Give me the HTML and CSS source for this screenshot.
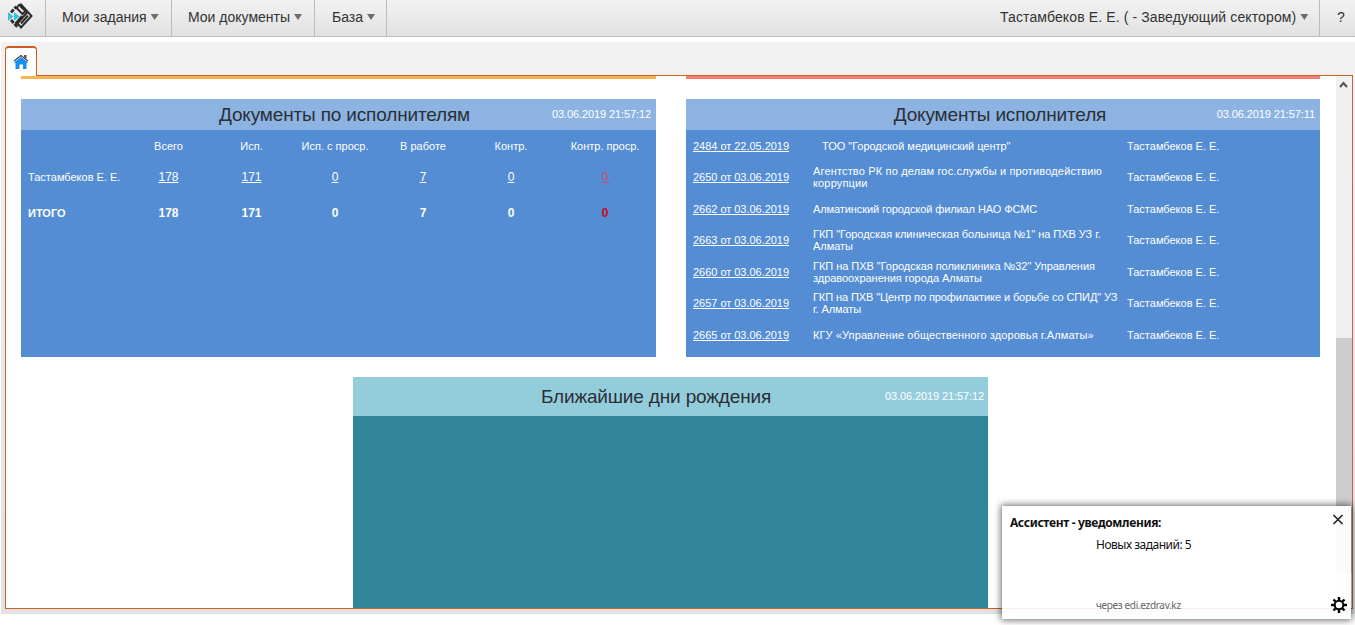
FILE: index.html
```html
<!DOCTYPE html>
<html lang="ru">
<head>
<meta charset="utf-8">
<title>Документооборот</title>
<link rel="stylesheet" href="styles.css">
</head>
<body>
<header class="topbar">
  <a class="logo"><svg width="26" height="26" viewBox="0 0 26 26" fill="none">
    <path d="M4 9.500 9.500 3.500M4 17l7 7.500" stroke="#2b2b2b" stroke-width="2.800" stroke-dasharray="4 1.200"/>
    <path d="M11 2.500 14 1.500l10.500 11.500L14 24.500l-3.500-4L20.500 9M11 2.500l-1 3 5.500 5.500 3-3-5.500-5M14 20.500l7-8M8.500 20.500 15 13" stroke="#2b2b2b" stroke-width="2"/>
    <path d="M1 9l5.500 4.500L1 18zM7 9l5.500 4.500L7 18z" fill="#35bfe3"/>
  </svg></a>
  <nav class="menu">
    <a class="item tasks"><span>Мои задания</span><i class="arrow"></i></a>
    <a class="item docs"><span>Мои документы</span><i class="arrow"></i></a>
    <a class="item base"><span>База</span><i class="arrow"></i></a>
  </nav>
  <a class="item user"><span>Тастамбеков Е. Е. ( - Заведующий сектором)</span><i class="arrow"></i></a>
  <a class="help">?</a>
</header>
<main class="shell">
  <div class="tabs"><div class="tab"><svg width="16" height="16" viewBox="0 0 16 16">
    <path d="M1.500 8 8 3l6.500 5v1H13.500v6H10v-4.500H6.500V15h-4V9h-1z" fill="#168ff0"/>
    <path d="M1 7l7-5.500L15 7" fill="none" stroke="#444" stroke-width="1.200"/><path d="M11 1h2.500v4L11 3z" fill="#555"/>
  </svg></div></div>
  <div class="content">
    <div class="board">
      <div class="strips"><div class="strip amber"></div><div class="strip coral"></div></div>
      <div class="pair">
        <section class="card blue">
          <div class="head"><h2 class="by-staff">Документы по исполнителям</h2><time>03.06.2019 21:57:12</time></div>
          <div class="stats labels"><span></span><b>Всего</b><b>Исп.</b><b>Исп. с проср.</b><b>В работе</b><b>Контр.</b><b>Контр. проср.</b></div>
          <div class="stats values"><span class="name">Тастамбеков Е. Е.</span><a>178</a><a>171</a><a>0</a><a>7</a><a>0</a><a class="late">0</a></div>
          <div class="stats total"><span>ИТОГО</span><b>178</b><b>171</b><b>0</b><b>7</b><b>0</b><b class="late">0</b></div>
        </section>
        <section class="card blue">
          <div class="head"><h2 class="own">Документы исполнителя</h2><time>03.06.2019 21:57:11</time></div>
          <div class="list">
            <a>2484 от 22.05.2019</a><p class="inset">ТОО "Городской медицинский центр"</p><span class="name">Тастамбеков Е. Е.</span>
            <a>2650 от 03.06.2019</a><p class="wide">Агентство РК по делам гос.службы и противодействию<br>коррупции</p><span class="name">Тастамбеков Е. Е.</span>
            <a>2662 от 03.06.2019</a><p class="tight">Алматинский городской филиал НАО ФСМС</p><span class="name">Тастамбеков Е. Е.</span>
            <a>2663 от 03.06.2019</a><p class="snug">ГКП "Городская клиническая больница №1" на ПХВ УЗ г.<br>Алматы</p><span class="name">Тастамбеков Е. Е.</span>
            <a>2660 от 03.06.2019</a><p class="snug">ГКП на ПХВ "Городская поликлиника №32" Управления<br>здравоохранения города Алматы</p><span class="name">Тастамбеков Е. Е.</span>
            <a>2657 от 03.06.2019</a><p class="tight">ГКП на ПХВ "Центр по профилактике и борьбе со СПИД" УЗ<br>г. Алматы</p><span class="name">Тастамбеков Е. Е.</span>
            <a>2665 от 03.06.2019</a><p class="loose">КГУ «Управление общественного здоровья г.Алматы»</p><span class="name">Тастамбеков Е. Е.</span>
          </div>
        </section>
      </div>
      <section class="card teal"><div class="head"><h2 class="birthdays">Ближайшие дни рождения</h2><time>03.06.2019 21:57:12</time></div></section>
    </div>
    <div class="scroll"><svg width="15" height="17" viewBox="0 0 15 17"><path d="M4 11l3.500-4 3.500 4" fill="none" stroke="#505050" stroke-width="2"/></svg><div class="thumb"></div></div>
  </div>
</main>
<aside class="toast">
  <div class="toast-head"><strong>Ассистент - уведомления:</strong><svg width="12" height="12" viewBox="0 0 12 12"><path d="M1.500 1l9 9m0-9l-9 9" stroke="#222" stroke-width="1.600"/></svg></div>
  <p class="toast-text">Новых заданий: 5</p>
  <div class="toast-foot"><span>через edi.ezdrav.kz</span><svg width="16" height="16" viewBox="-8 -8 16 16" fill="none" stroke="#000"><circle r="4.300" stroke-width="2"/><path d="M0-5v-3M0 5v3M-5 0h-3M5 0h3M-3.500-3.500l-2-2M3.500-3.500l2-2M-3.500 3.500l-2 2M3.500 3.500l2 2" stroke-width="2.400"/></svg></div>
</aside>
</body>
</html>
```
FILE: styles.css
```css
* { box-sizing: border-box; }
body { margin: 0; width: 1355px; height: 625px; overflow: hidden; background: #fff; font-family: "Liberation Sans", Arial, sans-serif; position: relative; }
h2, p { margin: 0; font-weight: normal; }
.topbar { display: flex; height: 37px; border-bottom: 1px solid #bcbcbc; background: linear-gradient(#f2f2f2, #e1e1e1); color: #333; font-size: 14px; line-height: 34px; }
.logo { width: 46px; padding: 3px 0 0 7px; border-right: 1px solid #bcbcbc; }
.logo svg { display: block; }
.menu { display: flex; flex: 1; }
.item { display: flex; white-space: nowrap; padding-left: 16px; border-right: 1px solid #bcbcbc; }
.item span { flex: none; }
.tasks { width: 126px; }
.docs { width: 143px; }
.base { width: 72px; padding-left: 17px; }
.user { width: 336px; letter-spacing: .12px; }
.arrow { margin: 14px 0 0 4px; width: 8px; height: 6px; background: #706b68; clip-path: polygon(0 0, 100% 0, 50% 100%); }
.help { width: 35px; padding-left: 17px; }
.shell { margin: 5px 0 0 1px; height: 572px; padding: 4px 2px 5px 4px; background: linear-gradient(#f2f2f2, #e1e1e1); }
.tabs { height: 29px; }
.tab { width: 32px; height: 30px; padding: 6px 0 0 7px; background: #fff; border: 1px solid #cf5a24; border-top-width: 2px; border-bottom: 0; border-radius: 4px 4px 0 0; position: relative; z-index: 1; }
.tab svg { display: block; }
.content { display: flex; height: 534px; width: 1348px; border: 1px solid #c9622f; background: #fff; overflow: hidden; }
.board { flex: 1; padding: 0 15px; }
.strips, .pair { display: flex; gap: 30px; }
.strips { height: 3px; }
.strip { width: 635px; }
.pair { width: 1299px; }
.strip + .strip, .pair .card + .card { width: 634px; }
.amber { background: #fbb450; }
.coral { background: #f77e73; }
.pair { margin-top: 20px; }
.card { width: 635px; color: #fff; }
.blue { height: 258px; background: #548dd4; }
.teal { height: 240px; background: #31859b; margin: 20px 0 0 332px; }
.head { display: grid; grid-template-columns: 1fr auto; align-items: center; height: 31px; background: #8db3e2; }
.teal .head { height: 39px; background: #93cddc; }
.head > * { grid-row: 1; }
.head h2 { grid-column: 1 / 3; text-align: center; font-size: 19px; line-height: 24px; letter-spacing: -.16px; color: #2b2f36; }
.head time { grid-column: 2; font-size: 11px; letter-spacing: -.1px; padding: 0 5px 2px 0; }
.teal .head time { padding-right: 4px; }
.head .by-staff { padding-left: 12px; }
.head .own { padding-right: 6px; }
.head .birthdays { padding-right: 29px; }
.stats { display: grid; grid-template-columns: 99px 83px 83px 84px 92px 84px 104px; align-items: center; padding-left: 7px; height: 30px; font-size: 12px; text-align: center; }
.stats > span { text-align: left; white-space: nowrap; }
.labels { font-size: 11px; height: 32px; }
.labels b { font-weight: normal; }
.stats a { text-decoration: underline; }
.stats .name { font-size: 11px; }
.total { font-weight: bold; height: 42px; }
.total span { font-size: 11px; }
.values .late { color: #d84864; }
.total .late { color: #c80a20; }
.list { display: grid; grid-template-columns: 120px 314px 1fr; grid-auto-rows: 31.500px; align-items: center; padding-left: 7px; font-size: 11px; line-height: 12px; white-space: nowrap; }
.list a { text-decoration: underline; letter-spacing: -.03px; }
.inset { padding-left: 9px; letter-spacing: -.03px; }
.wide { letter-spacing: .16px; }
.loose { letter-spacing: .1px; }
.snug { letter-spacing: -.04px; }
.tight { letter-spacing: -.09px; }
.scroll { width: 16px; background: #f0f0f0; height: 532px; }
.scroll svg { display: block; }
.thumb { margin-top: 245px; height: 235px; background: #cdcdcd; }
.toast { position: absolute; left: 1002px; top: 506px; width: 349px; height: 113px; padding: 8px 4px 5px 8px; background: rgba(255,255,255,.9); box-shadow: 0 0 7px 1px rgba(0,0,0,.6); font-family: "Noto Sans", "Open Sans", sans-serif; font-size: 12px; line-height: 18px; color: #111; }
.toast-head { display: flex; justify-content: space-between; padding-right: 3px; letter-spacing: -.33px; }
.toast-text { padding: 4px 0 0 86px; letter-spacing: -.5px; }
.toast-foot { display: flex; justify-content: space-between; align-items: center; padding: 42px 0 0 86px; font-size: 10px; letter-spacing: -.32px; color: #666; }
```
